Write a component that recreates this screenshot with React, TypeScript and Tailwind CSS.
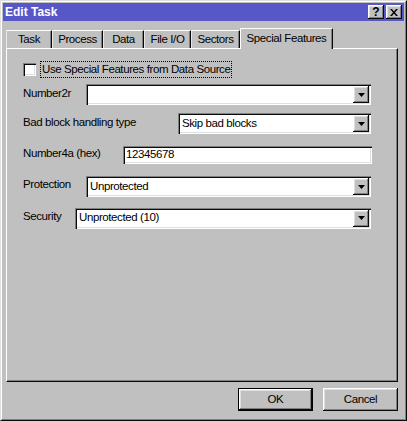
import React from "react";

const raised =
  "shadow-[inset_-1px_-1px_#0a0a0a,inset_1px_1px_#ffffff,inset_-2px_-2px_#808080,inset_2px_2px_#dfdfdf]";
const sunken =
  "shadow-[inset_1px_1px_#808080,inset_2px_2px_#0a0a0a,inset_-1px_-1px_#ffffff,inset_-2px_-2px_#dfdfdf]";

function Arrow() {
  return (
    <svg width="7" height="4" viewBox="0 0 7 4" className="block">
      <path d="M0 0H7L3.5 4Z" fill="#000" />
    </svg>
  );
}

function Combo({ w, value }: { w: string; value?: string }) {
  return (
    <div className={`${w} h-[21px] bg-white ${sunken} flex items-center p-[2px]`}>
      <div className="flex-1 pl-[2px] leading-none truncate text-black whitespace-nowrap">{value ?? ""}</div>
      <div className={`w-[16px] h-[17px] bg-[#c0c0c0] ${raised} flex items-center justify-center`}>
        <Arrow />
      </div>
    </div>
  );
}

function Tab({ label, w }: { label: string; w: string }) {
  return (
    <div
      className={`${w} h-[18px] border-t border-white border-l border-l-[#e8e8e8] border-r border-r-[#0a0a0a] shadow-[inset_-1px_0_#808080] flex items-center justify-center pt-[1px] whitespace-nowrap`}
    >
      {label}
    </div>
  );
}

export default function App() {
  return (
    <div className="w-[407px] h-[421px] bg-[#c0c0c0] border border-t-[#dfdfdf] border-l-[#dfdfdf] border-b-[#0a0a0a] border-r-[#0a0a0a] font-['Liberation_Sans',Arial,sans-serif] text-[11.5px] tracking-[-0.4px] text-black">
      <div className="w-full h-full border border-t-white border-l-white border-b-[#808080] border-r-[#808080] p-[1px] flex flex-col">
        {/* Title bar */}
        <div className="h-[18px] bg-[#5757c8] flex items-center justify-between pl-[2px] pr-[2px]">
          <span className="font-bold text-[12px] tracking-normal text-white leading-none">
            Edit Task
          </span>
          <div className="flex gap-[2px]">
            <div className={`w-[16px] h-[14px] bg-[#c0c0c0] ${raised} flex items-center justify-center font-bold text-[12px] tracking-normal leading-none pb-[1px]`}>
              ?
            </div>
            <div className={`w-[16px] h-[14px] bg-[#c0c0c0] ${raised} flex items-center justify-center`}>
              <svg width="8" height="7" viewBox="0 0 8 7" className="block">
                <path d="M0 0h2l2 2.5L6 0h2L5 3.5 8 7H6L4 4.5 2 7H0l3-3.5z" fill="#000" />
              </svg>
            </div>
          </div>
        </div>

        {/* Tabs */}
        <div className="mt-[7px] ml-[3px] h-[20px] flex items-end relative z-10">
          <Tab label="Task" w="w-[46px]" />
          <Tab label="Process" w="w-[51px]" />
          <Tab label="Data" w="w-[41px]" />
          <Tab label="File I/O" w="w-[47px]" />
          <Tab label="Sectors" w="w-[49px]" />
          <div className="w-[93px] h-[21px] mb-[-1px] bg-[#c0c0c0] border-t border-l border-white border-r border-r-[#0a0a0a] shadow-[inset_-1px_0_#808080] flex items-center justify-center pb-[1px] whitespace-nowrap">
            Special Features
          </div>
        </div>

        {/* Panel */}
        <div className="ml-[3px] mr-[6px] h-[334px] border-t border-l border-white border-r border-b border-r-[#0a0a0a] border-b-[#0a0a0a] shadow-[inset_-1px_-1px_#808080] flex flex-col">
          {/* Checkbox row */}
          <div className="mt-[12px] pl-[16px] flex items-center h-[17px]">
            <div className={`w-[13px] h-[13px] bg-white ${sunken}`} />
            <div className="ml-[4px] h-[17px] border border-dotted border-black px-[1px] flex items-center leading-none whitespace-nowrap">
              Use Special Features from Data Source
            </div>
          </div>

          <div className="mt-[6px] pl-[16px] flex items-center">
            <div className="w-[63px] pb-[2px] whitespace-nowrap">Number2r</div>
            <Combo w="w-[285px]" />
          </div>

          <div className="mt-[8px] pl-[16px] flex items-center">
            <div className="w-[155px] pb-[2px] whitespace-nowrap">Bad block handling type</div>
            <Combo w="w-[193px]" value="Skip bad blocks" />
          </div>

          <div className="mt-[11px] pl-[16px] flex items-center">
            <div className="w-[100px] pb-[2px] whitespace-nowrap">Number4a (hex)</div>
            <div className={`w-[249px] h-[18px] bg-white ${sunken} flex items-center pl-[3px] leading-none`}>
              12345678
            </div>
          </div>

          <div className="mt-[12px] pl-[16px] flex items-center">
            <div className="w-[63px] pb-[4px] whitespace-nowrap">Protection</div>
            <Combo w="w-[285px]" value="Unprotected" />
          </div>

          <div className="mt-[10px] pl-[16px] flex items-center">
            <div className="w-[52px] pb-[4px] whitespace-nowrap">Security</div>
            <Combo w="w-[296px]" value="Unprotected (10)" />
          </div>
        </div>

        {/* Buttons */}
        <div className="mt-[6px] mr-[6px] flex justify-end gap-[10px]">
          <div className="w-[75px] h-[23px] border border-black bg-[#c0c0c0] flex">
            <div className={`flex-1 ${raised} flex items-center justify-center`}>OK</div>
          </div>
          <div className={`w-[75px] h-[23px] bg-[#c0c0c0] ${raised} flex items-center justify-center`}>
            Cancel
          </div>
        </div>
      </div>
    </div>
  );
}
